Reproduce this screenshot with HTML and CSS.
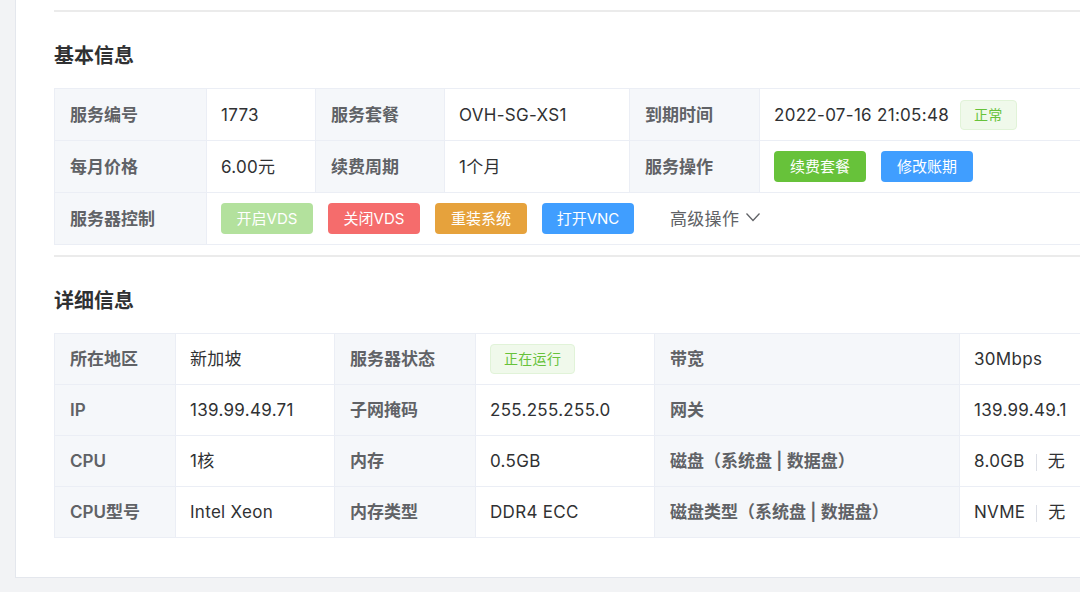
FILE: index.html
```html
<!DOCTYPE html>
<html lang="zh-CN">
<head>
<meta charset="utf-8">
<link rel="stylesheet" href="styles.css">
</head>
<body>
<div class="card">
  <div class="divider"></div>
  <h2 class="title">基本信息</h2>
  <table class="desc desc-basic">
    <colgroup>
      <col style="width:152px"><col style="width:109px"><col style="width:129px"><col style="width:185px"><col style="width:130px"><col>
    </colgroup>
    <tr>
      <th>服务编号</th><td>1773</td>
      <th>服务套餐</th><td>OVH-SG-XS1</td>
      <th>到期时间</th><td><span class="val">2022-07-16 21:05:48</span><span class="tag">正常</span></td>
    </tr>
    <tr>
      <th>每月价格</th><td>6.00元</td>
      <th>续费周期</th><td>1个月</td>
      <th>服务操作</th><td><div class="btns"><span class="btn btn-green">续费套餐</span><span class="btn btn-blue">修改账期</span></div></td>
    </tr>
    <tr>
      <th>服务器控制</th>
      <td colspan="5">
        <div class="btns">
          <span class="btn btn-green-light">开启VDS</span>
          <span class="btn btn-red">关闭VDS</span>
          <span class="btn btn-orange">重装系统</span>
          <span class="btn btn-blue">打开VNC</span>
          <span class="more">高级操作<svg class="chev" width="16" height="10" viewBox="0 0 16 10"><path d="M1.5 1.5 L8 8.5 L14.5 1.5" fill="none" stroke="#606266" stroke-width="1.3"/></svg></span>
        </div>
      </td>
    </tr>
  </table>

  <div class="divider"></div>
  <h2 class="title">详细信息</h2>
  <table class="desc desc-detail">
    <colgroup>
      <col style="width:121px"><col style="width:159px"><col style="width:141px"><col style="width:179px"><col style="width:305px"><col>
    </colgroup>
    <tr>
      <th>所在地区</th><td>新加坡</td>
      <th>服务器状态</th><td><span class="tag tag-run">正在运行</span></td>
      <th>带宽</th><td>30Mbps</td>
    </tr>
    <tr>
      <th>IP</th><td>139.99.49.71</td>
      <th>子网掩码</th><td>255.255.255.0</td>
      <th>网关</th><td>139.99.49.1</td>
    </tr>
    <tr>
      <th>CPU</th><td>1核</td>
      <th>内存</th><td>0.5GB</td>
      <th>磁盘（系统盘 | 数据盘）</th><td>8.0GB<span class="vsep"></span>无</td>
    </tr>
    <tr>
      <th>CPU型号</th><td>Intel Xeon</td>
      <th>内存类型</th><td>DDR4 ECC</td>
      <th>磁盘类型（系统盘 | 数据盘）</th><td>NVME<span class="vsep"></span>无</td>
    </tr>
  </table>
</div>
</body>
</html>
```

FILE: styles.css
```css
html, body {
  margin: 0;
  padding: 0;
}
body {
  background: #f2f3f5;
  font-family: "Inter", "Noto Sans CJK SC", sans-serif;
  overflow: hidden;
  width: 1080px;
  height: 592px;
}
.card {
  margin-left: 15px;
  width: 1200px;
  height: 578px;
  box-sizing: border-box;
  background: #fff;
  border: 1px solid #e4e7ed;
  border-top: none;
  padding: 10px 0 0 38px;
}
.divider {
  height: 2px;
  background: #ebebeb;
}
.title {
  margin: 30px 0 18px 0;
  font-size: 20px;
  line-height: 28px;
  font-weight: 700;
  color: #303133;
}
.desc {
  border-collapse: collapse;
  table-layout: fixed;
  width: 1146px;
  font-size: 17px;
  line-height: 24px;
}
.desc th, .desc td {
  border: 1px solid #ebeef5;
  padding: 0 15px;
  text-align: left;
  vertical-align: middle;
  white-space: nowrap;
  line-height: 24px;
}
.desc th {
  background: #f5f7fa;
  color: #606266;
  font-weight: 600;
}
.desc td {
  padding-left: 14px;
  color: #303133;
  font-weight: 400;
  letter-spacing: 0.3px;
}
.desc-basic tr { height: 52px; }
.desc-basic + .divider { margin-top: 10px; }
.desc-detail tr { height: 51px; }

.val { vertical-align: middle; }
.tag {
  display: inline-block;
  vertical-align: middle;
  margin-left: 11px;
  height: 30px;
  line-height: 28px;
  box-sizing: border-box;
  padding: 0 13px;
  font-size: 14px;
  letter-spacing: 0.3px;
  color: #67c23a;
  background: #f0f9eb;
  border: 1px solid #e1f3d8;
  border-radius: 4px;
}
.tag-run {
  margin-left: 0;
}
.btns {
  display: flex;
  align-items: center;
  gap: 15px;
}
.btn {
  display: inline-flex;
  align-items: center;
  justify-content: center;
  width: 92px;
  height: 31px;
  border-radius: 4px;
  color: #fff;
  font-size: 15px;
  line-height: 20px;
  letter-spacing: 0;
}
.btn-green { background: #67c23a; }
.btn-blue { background: #409eff; }
.btn-green-light { background: #b3e19d; }
.btn-red { background: #f56c6c; }
.btn-orange { background: #e6a23c; }
.more {
  margin-left: 21px;
  color: #606266;
  font-size: 17px;
  display: inline-flex;
  align-items: center;
  gap: 6px;
}
.chev { margin-top: -4px; }
.vsep {
  display: inline-block;
  width: 1px;
  height: 17px;
  background: #dcdfe6;
  margin: 0 11px;
  vertical-align: middle;
}
```
